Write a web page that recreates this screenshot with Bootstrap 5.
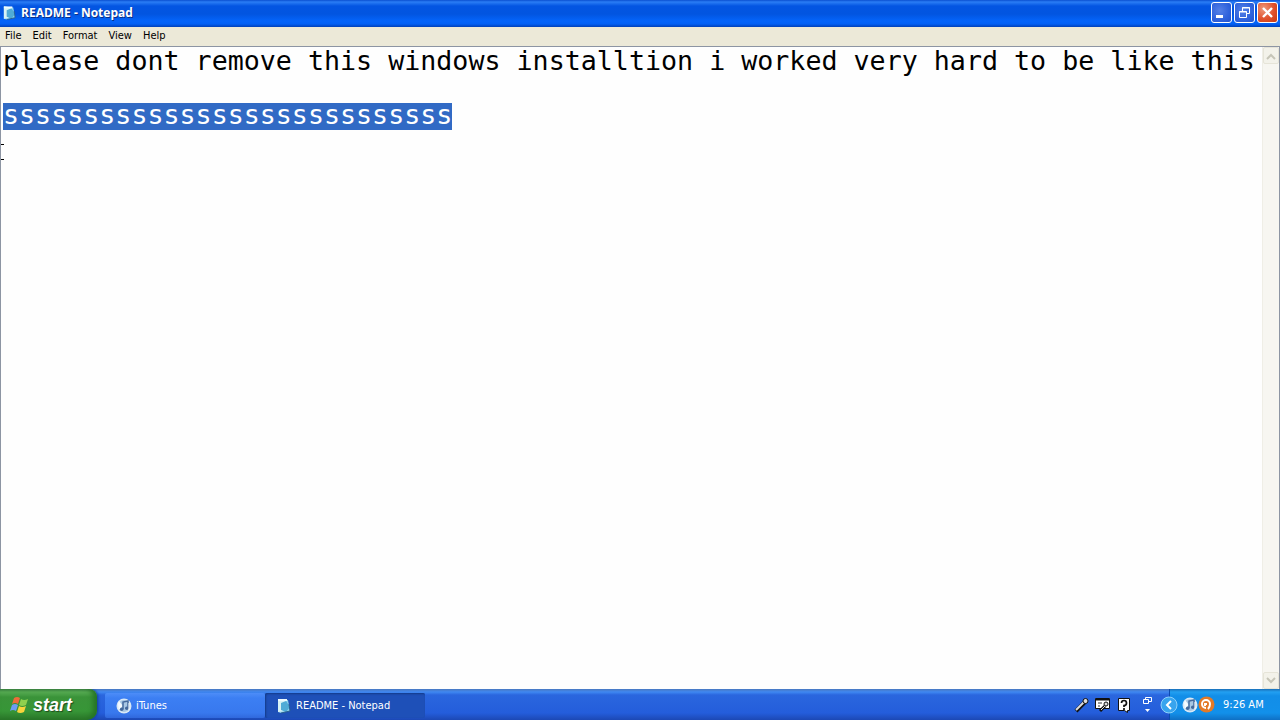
<!DOCTYPE html>
<html lang="en">
<head>
<meta charset="utf-8">
<meta name="viewport" content="width=device-width, initial-scale=1">
<title>README - Notepad</title>
<link rel="stylesheet" href="https://cdn.jsdelivr.net/npm/bootstrap@5.3.0/dist/css/bootstrap.min.css">
<style>
  body { font: 11px/14px "DejaVu Sans Condensed", "DejaVu Sans", sans-serif; background: #fefefe; }
  svg { display: block; flex: none; }
  .titlebar { height: 27px; padding: 0 2px 2px; color: #fff; background: linear-gradient(#0a4fd0, #2a7df5 2px, #0355e2 6px, #0255e0 14px, #0464fa 21px, #0360f4 24px, #0140b8); }
  .titlebar h1 { font: bold 12px/25px "Open Sans", sans-serif; margin: 0; text-shadow: 1px 1px #0a2f86; }
  .caption-group { gap: 2px; }
  .caption-btn { width: 21px; height: 21px; padding: 0; border: 1px solid #fff; border-radius: 3px; background: radial-gradient(circle at 40% 40%, #5580e6, #2f62dc 60%, #2453cc); }
  .caption-btn.close-btn { background: radial-gradient(circle at 30% 30%, #ee9a7c, #e0512c 55%, #c83a12); }
  .menubar { height: 19px; gap: 11px; background: #ece9d8; padding-left: 5px; }
  .menubar button { border: 0; padding: 0; background: none; color: #000; line-height: 17px; }
  .editor { border: 1px solid #8d95a3; border-bottom: 0; background: #fefefe; }
  .editor textarea { display: block; border: 0; outline: 0; resize: none; overflow: hidden; white-space: pre; padding: 0 0 0 2px; color: #000; font: 20pt/27px "DejaVu Sans Mono", monospace; caret-color: transparent; background: linear-gradient(#316ac5, #316ac5) no-repeat 2px 56px / 28ch 27px; }
  .editor textarea::selection { background: transparent; color: #fff; }
  .scroll-track { width: 17px; background: #f7f6f1; border-left: 1px solid #efeee6; }
  .scroll-track button { width: 16px; height: 17px; padding: 0; border: 1px solid #e6e4d8; border-radius: 2px; background: #f3f2ea; }
  .ibeam { left: 0; top: 97px; pointer-events: none; }
  .taskbar { height: 31px; background: linear-gradient(#4a78c0, #3f88f2 3px, #2a66de 6px, #245ddb 24px, #1c48b4); }
  .start-btn { width: 97px; border: 0; padding: 0 0 0 10px; color: #fff; border-radius: 0 8px 10px 0; background: linear-gradient(#4b8a55, #58ad54 3px, #3a9339 8px, #379637 22px, #2a7629); box-shadow: 1px 0 3px #123c94, inset -4px 0 5px #267426; font: italic bold 18px/28px "Liberation Sans", sans-serif; text-shadow: 1px 1px 1px #1c4a1c; }
  .task { width: 160px; height: 25px; margin-top: 4px; padding: 0 0 0 11px; border: 0; border-radius: 2px; color: #fff; background: linear-gradient(#4d8df8, #3c7ff3 5px, #3878ee 20px, #3068dc); }
  .task.current { background: #1e50b8; box-shadow: inset 1px 1px 2px #133a88; }
  .quick { gap: 5px; margin-right: 12px; }
  .quick button, .tray button { border: 0; padding: 0; background: none; }
  .tray { width: 111px; color: #fff; border-left: 1px solid #0c4bb0; background: linear-gradient(#1a6fb8, #22a0f2 3px, #128ee8 7px, #1290ea 24px, #0f70c4); }
  .tray .expander { margin-left: -10px; }
</style>
</head>
<body class="vh-100 d-flex flex-column overflow-hidden">
<svg width="0" height="0" class="position-absolute" aria-hidden="true">
  <defs>
    <symbol id="note" viewBox="0 0 16 16"><path d="M2 1l10 1 2 11-9 2-3-1z" fill="#8fd3ea"/><path d="M2 1l8 1-1 11-7 1z" fill="#d7f2f5"/><path d="M5 5l5-2 4 6-4 5-5-2z" fill="#4fabd6"/><path d="M2 2h9" stroke="#eefcff" stroke-width="2"/><path d="M13 6l1 7-9 2" fill="none" stroke="#285f91"/></symbol>
    <symbol id="music" viewBox="0 0 16 16"><circle cx="8" cy="8" r="7.500" fill="#d8e8f6"/><circle cx="8" cy="8" r="6" fill="#a9c8e4"/><path d="M3 3q-2 4 0 9l4-4z" fill="#f5fbff"/><path d="M7 11V4l5-1v7" fill="none" stroke="#44699c" stroke-width="1.500"/><circle cx="5.700" cy="11.300" r="1.800" fill="#44699c"/><circle cx="10.800" cy="10.300" r="1.800" fill="#44699c"/><path d="M13 5v7" stroke="#fff"/></symbol>
  </defs>
</svg>

<header class="titlebar d-flex align-items-center">
  <svg class="me-1" width="15" height="16"><use href="#note"/></svg>
  <h1 class="flex-grow-1">README - Notepad</h1>
  <div class="caption-group d-flex">
    <button class="caption-btn" type="button" aria-label="Minimize"><svg width="19" height="19"><path d="M4 12h7v3H4z" fill="#fff"/></svg></button>
    <button class="caption-btn" type="button" aria-label="Restore"><svg width="19" height="19" fill="none" stroke="#fff"><path d="M7.500 8V4.500h7v6H12M7 5h8M4.500 8.500h7v6h-7zM4 9h8"/></svg></button>
    <button class="caption-btn close-btn" type="button" aria-label="Close"><svg width="19" height="19"><path d="M5 5l9 9M14 5l-9 9" stroke="#fff" stroke-width="2.400"/></svg></button>
  </div>
</header>

<nav class="menubar d-flex align-items-start" aria-label="Menu">
  <button type="button">File</button>
  <button type="button">Edit</button>
  <button type="button">Format</button>
  <button type="button">View</button>
  <button type="button">Help</button>
</nav>

<main class="editor d-flex flex-grow-1 position-relative">
  <textarea id="doc" class="flex-grow-1" spellcheck="false" aria-label="Document text">please dont remove this windows installtion i worked very hard to be like this

ssssssssssssssssssssssssssss
</textarea>
  <div class="scroll-track d-flex flex-column justify-content-between">
    <button type="button" aria-label="Scroll up"><svg width="14" height="15"><path d="M3 11l4-4 4 4" fill="none" stroke="#c6c5b8" stroke-width="2"/></svg></button>
    <button type="button" aria-label="Scroll down"><svg width="14" height="15"><path d="M3 5l4 4 4-4" fill="none" stroke="#c6c5b8" stroke-width="2"/></svg></button>
  </div>
  <svg class="ibeam position-absolute" width="4" height="16" aria-hidden="true"><path d="M0 .5h3M0 15.500h3" stroke="#000"/></svg>
</main>

<footer class="taskbar d-flex">
  <button class="start-btn d-flex align-items-center me-2" type="button">
    <svg class="me-1" width="19" height="18" viewBox="0 0 19 18"><path d="M4 2q3-2 6 0L8 8Q5 6 2 8z" fill="#ee6b3a"/><path d="M11 3q3 2 7 0l-2 6q-4 2-7 0z" fill="#8fd04e"/><path d="M2 9q3-2 6 0l-2 6q-3-2-6 0z" fill="#6c9cf4"/><path d="M9 10q3 2 7 0l-2 6q-4 2-7 0z" fill="#f8d43c"/></svg>
    start
  </button>
  <button class="task d-flex align-items-center gap-1" type="button"><svg width="16" height="16"><use href="#music"/></svg>iTunes</button>
  <button class="task current d-flex align-items-center gap-1" type="button"><svg width="16" height="16"><use href="#note"/></svg>README - Notepad</button>
  <div class="quick d-flex align-items-center ms-auto">
    <button type="button" aria-label="Microphone"><svg width="16" height="16"><path d="M2 14l9-9" stroke="#111" stroke-width="4"/><path d="M2 13l9-9" stroke="#ddd" stroke-width="2"/><circle cx="11.500" cy="4" r="2.500" fill="#ddd" stroke="#111"/></svg></button>
    <button type="button" aria-label="Tools"><svg width="16" height="16"><path d="M.5 1.500h14v10h-14z" fill="#fff" stroke="#111"/><path d="M1 2.500h13" stroke="#111" stroke-width="2"/><path d="M3 6h4M3 9h2" stroke="#333"/><path d="M5 14l5-5" stroke="#111" stroke-width="3"/><path d="M6 13l4-4" stroke="#ddd"/><circle cx="11" cy="7" r="2" fill="#ddd" stroke="#111"/></svg></button>
    <button type="button" aria-label="Help"><svg width="16" height="16"><path d="M2.500 1.500h11v12h-2v2l-3-2h-6z" fill="#fff" stroke="#111"/><path d="M5.500 6q0-2.500 2.500-2.500T10.500 6 8 8.500V10M8 11v2" fill="none" stroke="#111" stroke-width="1.700"/></svg></button>
    <button type="button" aria-label="Language bar options"><svg width="20" height="20"><path d="M8.500 5V2.500h6v4H12M6.500 4.500h5v4h-5z" fill="none" stroke="#fff"/><path d="M8 14h5l-2.500 3z" fill="#fff"/></svg></button>
  </div>
  <div class="tray d-flex align-items-center">
    <button type="button" class="expander" aria-label="Show hidden icons"><svg width="18" height="18"><circle cx="9" cy="9" r="8" fill="#38a4ee" stroke="#8fd2fb"/><path d="M11 5L7 9l4 4" fill="none" stroke="#fff" stroke-width="2"/></svg></button>
    <button type="button" class="ms-1" aria-label="iTunes"><svg width="16" height="16"><use href="#music"/></svg></button>
    <button type="button" aria-label="Messages"><svg width="17" height="17"><circle cx="8.500" cy="8.500" r="8" fill="#e37a28"/><path d="M8 12a4 4 0 1 1 4-4q0 3-2 5M9 8h-2v2" fill="none" stroke="#fff" stroke-width="2"/></svg></button>
    <time class="ms-2">9:26 AM</time>
  </div>
</footer>
<script src="https://cdn.jsdelivr.net/npm/bootstrap@5.3.0/dist/js/bootstrap.bundle.min.js"></script>
<script>
  const doc = document.getElementById('doc');
  const start = doc.value.indexOf('ssss');
  doc.focus();
  doc.setSelectionRange(start, start + 28);
</script>
</body>
</html>
